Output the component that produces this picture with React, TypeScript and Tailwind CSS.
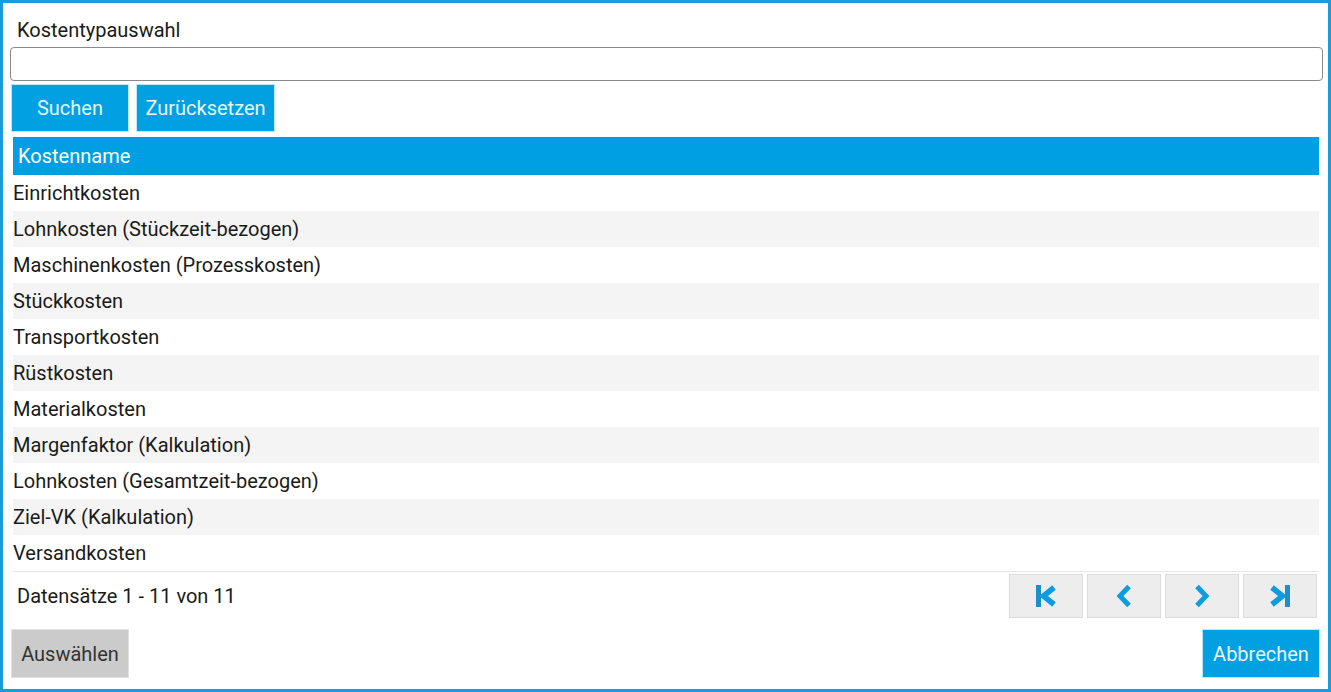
import React from "react";

const rows = [
  "Einrichtkosten",
  "Lohnkosten (Stückzeit-bezogen)",
  "Maschinenkosten (Prozesskosten)",
  "Stückkosten",
  "Transportkosten",
  "Rüstkosten",
  "Materialkosten",
  "Margenfaktor (Kalkulation)",
  "Lohnkosten (Gesamtzeit-bezogen)",
  "Ziel-VK (Kalkulation)",
  "Versandkosten",
];

function FirstIcon() {
  return (
    <svg width="24" height="24" viewBox="0 0 24 24">
      <rect x="2" y="1" width="5" height="22" fill="#1a8fcc" />
      <path d="M20 3.5 L9.5 12 L20 20.5" fill="none" stroke="#0e9be0" strokeWidth="5.5" />
    </svg>
  );
}
function PrevIcon() {
  return (
    <svg width="24" height="24" viewBox="0 0 24 24">
      <path d="M17 2.5 L8 12 L17 21.5" fill="none" stroke="#0e9be0" strokeWidth="5" />
    </svg>
  );
}
function NextIcon() {
  return (
    <svg width="24" height="24" viewBox="0 0 24 24">
      <path d="M7 2.5 L16 12 L7 21.5" fill="none" stroke="#0e9be0" strokeWidth="5" />
    </svg>
  );
}
function LastIcon() {
  return (
    <svg width="24" height="24" viewBox="0 0 24 24">
      <path d="M4 3.5 L14.5 12 L4 20.5" fill="none" stroke="#0e9be0" strokeWidth="5.5" />
      <rect x="17" y="1" width="5" height="22" fill="#1a8fcc" />
    </svg>
  );
}

export default function App() {
  return (
    <div
      className="w-[1331px] h-[692px] box-border border-[3px] border-[#1b9bd8] bg-white flex flex-col text-[20px] text-[#1a1a1a]"
      style={{ fontFamily: "Roboto, 'Liberation Sans', sans-serif" }}
    >
      <div className="mt-[14px] ml-[14px] h-[26px] leading-[26px]">Kostentypauswahl</div>
      <input
        className="mt-[4px] ml-[7px] mr-[5px] h-[34px] border border-[#8a8a8a] rounded-[4px] outline-none px-2"
        type="text"
      />
      <div className="mt-[3px] ml-[8px] flex gap-[7px]">
        <button className="w-[118px] h-[48px] bg-[#00a0e3] text-[#eaf6fc] text-[20px] border border-[#bfe6f7]">
          Suchen
        </button>
        <button className="w-[139px] h-[48px] bg-[#00a0e3] text-[#eaf6fc] text-[20px] border border-[#bfe6f7]">
          Zurücksetzen
        </button>
      </div>
      <div className="mt-[5px] ml-[10px] mr-[9px] h-[38px] bg-[#009fe3] text-white flex items-center pl-[5px]">
        Kostenname
      </div>
      <div className="ml-[10px] mr-[9px] flex flex-col border-b border-[#e6e6e6]">
        {rows.map((r, i) => (
          <div
            key={r}
            className={`h-[36px] flex items-center ${i % 2 === 1 ? "bg-[#f4f4f4]" : "bg-white"}`}
          >
            {r}
          </div>
        ))}
      </div>
      <div className="mt-[2px] ml-[14px] mr-[11px] h-[44px] flex items-center justify-between">
        <span>Datensätze 1 - 11 von 11</span>
        <div className="flex gap-[4px]">
          <button className="w-[74px] h-[44px] bg-[#ededed] border border-[#dcdcdc] flex items-center justify-center">
            <FirstIcon />
          </button>
          <button className="w-[74px] h-[44px] bg-[#ededed] border border-[#dcdcdc] flex items-center justify-center">
            <PrevIcon />
          </button>
          <button className="w-[74px] h-[44px] bg-[#ededed] border border-[#dcdcdc] flex items-center justify-center">
            <NextIcon />
          </button>
          <button className="w-[74px] h-[44px] bg-[#ededed] border border-[#dcdcdc] flex items-center justify-center">
            <LastIcon />
          </button>
        </div>
      </div>
      <div className="mt-[11px] ml-[8px] mr-[8px] flex justify-between">
        <button className="w-[118px] h-[49px] bg-[#cbcbcb] text-[#333] text-[20px] border border-[#e0e0e0]">
          Auswählen
        </button>
        <button className="w-[118px] h-[49px] bg-[#00a0e3] text-[#eaf6fc] text-[20px] border border-[#bfe6f7]">
          Abbrechen
        </button>
      </div>
    </div>
  );
}
